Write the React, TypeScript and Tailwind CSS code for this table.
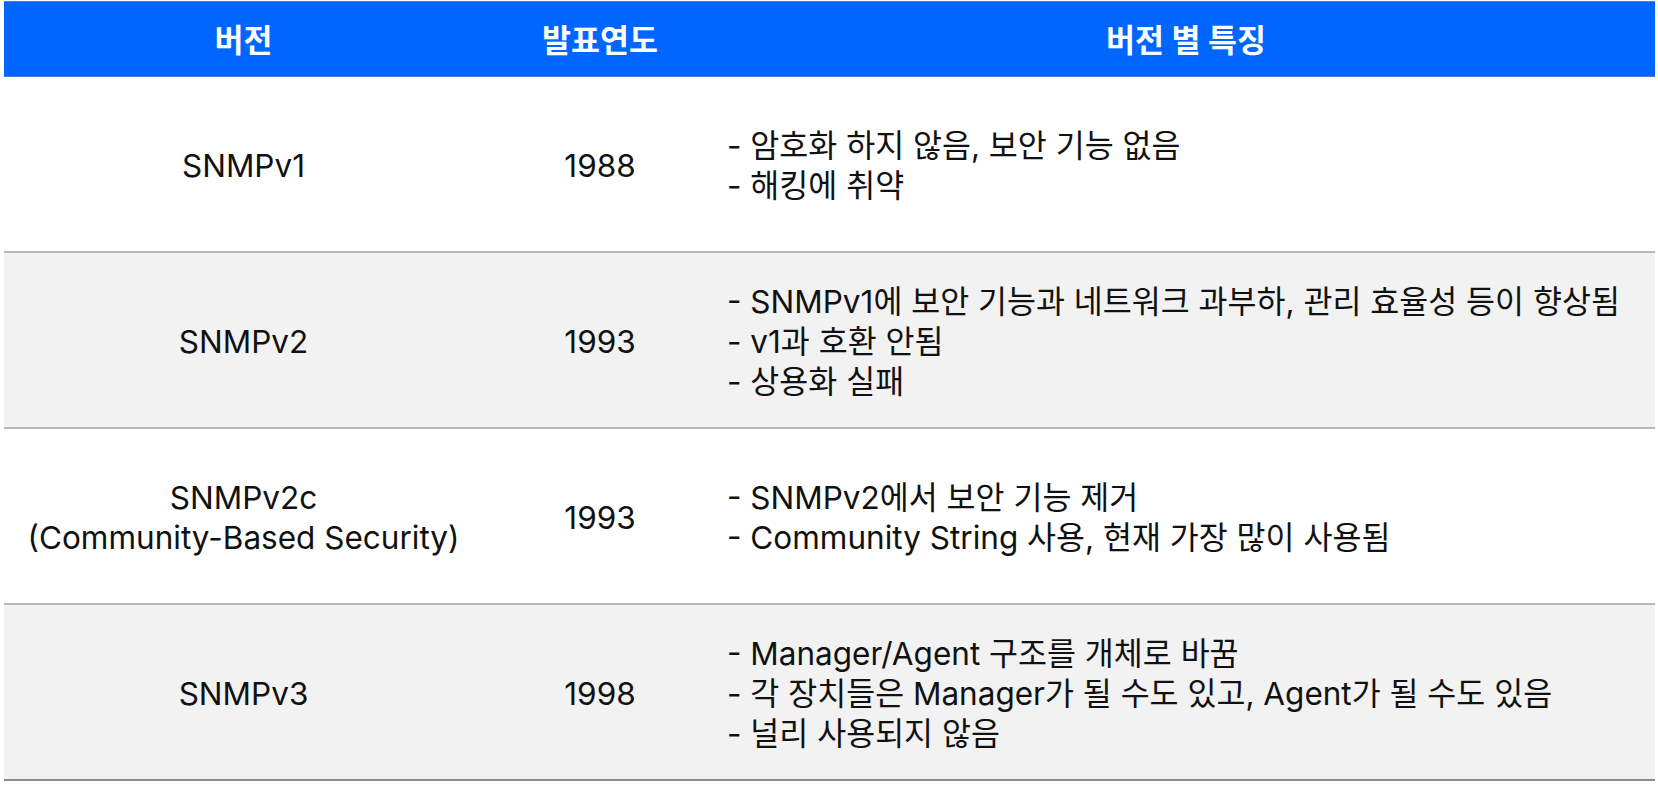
const rows = [
  {
    version: ["SNMPv1"],
    year: "1988",
    notes: ["- 암호화 하지 않음, 보안 기능 없음", "- 해킹에 취약"],
    shaded: false,
  },
  {
    version: ["SNMPv2"],
    year: "1993",
    notes: [
      "- SNMPv1에 보안 기능과 네트워크 과부하, 관리 효율성 등이 향상됨",
      "- v1과 호환 안됨",
      "- 상용화 실패",
    ],
    shaded: true,
  },
  {
    version: ["SNMPv2c", "(Community-Based Security)"],
    year: "1993",
    notes: ["- SNMPv2에서 보안 기능 제거", "- Community String 사용, 현재 가장 많이 사용됨"],
    shaded: false,
  },
  {
    version: ["SNMPv3"],
    year: "1998",
    notes: [
      "- Manager/Agent 구조를 개체로 바꿈",
      "- 각 장치들은 Manager가 될 수도 있고, Agent가 될 수도 있음",
      "- 널리 사용되지 않음",
    ],
    shaded: true,
  },
];

export default function App() {
  return (
    <div
      className="w-full min-h-screen bg-white pl-[4px] pr-[3px] pt-[1px] text-[#111111]"
      style={{ fontFamily: '"Inter", "Noto Sans CJK KR", sans-serif' }}
    >
      {/* header */}
      <div className="grid grid-cols-[479px_234px_1fr] h-[76px] bg-[#0066ff] border-t border-b border-[#4d7fd0] text-white text-[31.5px] font-bold pt-[3px]">
        <div className="flex items-center justify-center">버전</div>
        <div className="flex items-center justify-center">발표연도</div>
        <div className="flex items-center justify-center">버전 별 특징</div>
      </div>

      {rows.map((row, i) => (
        <div
          key={i}
          className={
            "grid grid-cols-[479px_234px_1fr] h-[176px] border-b-2 pt-[4px] text-[31.5px] leading-[40px] " +
            (row.shaded ? "bg-[#f2f2f2] " : "bg-white ") +
            (i === rows.length - 1 ? "border-[#8c8c8c]" : "border-[#b9b9b9]")
          }
        >
          <div className="flex flex-col items-center justify-center text-center">
            {row.version.map((v) => (
              <span key={v}>{v}</span>
            ))}
          </div>
          <div className="flex items-center justify-center">{row.year}</div>
          <div className="flex flex-col justify-center pl-[10px]">
            {row.notes.map((n) => (
              <span key={n}>{n}</span>
            ))}
          </div>
        </div>
      ))}
    </div>
  );
}
